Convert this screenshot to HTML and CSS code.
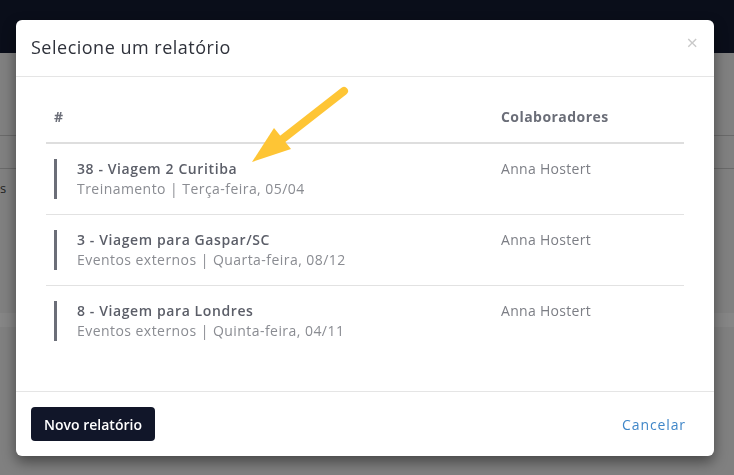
FILE: index.html
```html
<!DOCTYPE html>
<html lang="pt-BR">
<head>
<meta charset="utf-8">
<title>Selecione um relatório</title>
<link rel="stylesheet" href="styles.css">
</head>
<body>
<div class="navbar"></div>
<div class="page">
  <div class="page-bar"></div>
  <div class="page-row"><span class="page-text">s</span></div>
  <div class="page-band"></div>
</div>

<div class="modal">
  <div class="modal-header">
    <h5 class="modal-title">Selecione um relatório</h5>
    <span class="close">&times;</span>
  </div>
  <div class="modal-body">
    <table class="table">
      <thead>
        <tr><th class="col-main">#</th><th>Colaboradores</th></tr>
      </thead>
      <tbody>
        <tr>
          <td><div class="item"><div class="item-title">38 - Viagem 2 Curitiba</div><div class="item-sub">Treinamento | Terça-feira, 05/04</div></div></td>
          <td class="person">Anna Hostert</td>
        </tr>
        <tr>
          <td><div class="item"><div class="item-title">3 - Viagem para Gaspar/SC</div><div class="item-sub">Eventos externos | Quarta-feira, 08/12</div></div></td>
          <td class="person">Anna Hostert</td>
        </tr>
        <tr>
          <td><div class="item"><div class="item-title">8 - Viagem para Londres</div><div class="item-sub">Eventos externos | Quinta-feira, 04/11</div></div></td>
          <td class="person">Anna Hostert</td>
        </tr>
      </tbody>
    </table>
  </div>
  <div class="modal-footer">
    <button class="btn-primary">Novo relatório</button>
    <a class="btn-link">Cancelar</a>
  </div>
</div>

<svg class="arrow" width="734" height="475" viewBox="0 0 734 475">
  <line x1="344" y1="91" x2="280" y2="141" stroke="#fec535" stroke-width="8" stroke-linecap="round"/>
  <polygon points="252,162 274,128 291,149" fill="#fec535"/>
</svg>
</body>
</html>
```

FILE: styles.css
```css
html, body {
  margin: 0;
  padding: 0;
}
body {
  width: 734px;
  height: 475px;
  overflow: hidden;
  background: #808080;
  font-family: "Open Sans", "DejaVu Sans", sans-serif;
}
.navbar {
  height: 53px;
  background: #0a0e1a;
}
.page {
  padding-top: 82px;
}
.page-bar {
  height: 32px;
  border-top: 1px solid #6a6a6a;
  border-bottom: 1px solid #6a6a6a;
}
.page-row {
  height: 30px;
  padding-top: 10px;
}
.page-text {
  display: block;
  margin-left: 0;
  font-size: 13px;
  color: #222;
}
.page-band {
  margin-top: 104px;
  height: 14px;
  background: #868686;
}

.modal {
  position: fixed;
  left: 16px;
  top: 20px;
  width: 698px;
  height: 436px;
  background: #fff;
  border-radius: 6px;
  box-shadow: 0 6px 14px rgba(0, 0, 0, 0.45);
  display: flex;
  flex-direction: column;
  box-sizing: border-box;
}
.modal-header {
  height: 57px;
  box-sizing: border-box;
  border-bottom: 1px solid #e5e5e5;
  display: flex;
  align-items: center;
  justify-content: space-between;
  padding: 0 16px 2px 15px;
}
.modal-title {
  margin: 0;
  font-size: 18px;
  font-weight: 400;
  color: #2f323b;
  letter-spacing: 0.5px;
}
.close {
  font-size: 20px;
  line-height: 1;
  color: #c9c9c9;
  margin-top: -8px;
}
.modal-body {
  flex: 1;
  padding: 16px 30px 0 30px;
}
.table {
  width: 100%;
  border-collapse: collapse;
  font-size: 14px;
  letter-spacing: 0.45px;
}
.table th {
  text-align: left;
  font-weight: 700;
  color: #6b6e78;
  padding: 14px 8px 15px 8px;
  line-height: 20px;
  border-bottom: 2px solid #dedede;
}
.table th.col-main {
  width: 431px;
}
.table td {
  vertical-align: top;
  padding: 15px 8px;
  line-height: 20px;
  border-bottom: 1px solid #e2e2e2;
}
.table tbody tr:last-child td {
  border-bottom: none;
}
.item {
  border-left: 3px solid #6b6e78;
  padding-left: 20px;
}
.item-title {
  font-weight: 600;
  color: #5b5e68;
  letter-spacing: 0.6px;
}
.item-sub {
  color: #8a8c92;
}
.person {
  color: #7c7e85;
  letter-spacing: 0.3px;
}
.modal-footer {
  height: 65px;
  box-sizing: border-box;
  border-top: 1px solid #e5e5e5;
  display: flex;
  align-items: center;
  justify-content: space-between;
  padding: 0 28px 0 15px;
}
.btn-primary {
  height: 34px;
  width: 124px;
  border: none;
  border-radius: 4px;
  background: #111629;
  color: #fff;
  font-family: inherit;
  font-size: 14px;
  font-weight: 600;
}
.btn-link {
  color: #3f86c8;
  font-size: 14px;
  letter-spacing: 0.9px;
}
.arrow {
  position: fixed;
  left: 0;
  top: 0;
  pointer-events: none;
}
```
